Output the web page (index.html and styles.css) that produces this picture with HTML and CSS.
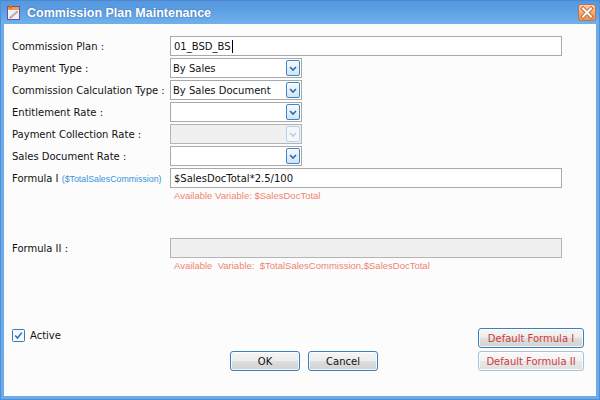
FILE: index.html
```html
<!DOCTYPE html>
<html>
<head>
<meta charset="utf-8">
<link rel="stylesheet" href="styles.css">
</head>
<body>
<div class="win">
  <div class="titlebar">
    <svg class="ticon" width="13" height="15" viewBox="0 0 13 15">
      <rect x="0.5" y="1.5" width="12" height="13" fill="#f4f0fa" stroke="#6b4fa8"/>
      <rect x="1" y="2" width="11" height="3" fill="#f0a040"/>
      <rect x="2" y="0.5" width="3" height="3" fill="#e06a20"/>
      <path d="M3 12 L10 6 L11 7 L4 13 Z" fill="#c8c8c8" stroke="#8a8a8a" stroke-width="0.6"/>
      <path d="M3 12 L2.5 13.5 L4 13 Z" fill="#555"/>
    </svg>
    <span class="title">Commission Plan Maintenance</span>
    <div class="close">
      <svg width="16" height="15" viewBox="0 0 16 15">
        <path d="M4 3.5 L12 11.5 M12 3.5 L4 11.5" stroke="#c8662e" stroke-width="4" stroke-linecap="square"/>
        <path d="M4 3.5 L12 11.5 M12 3.5 L4 11.5" stroke="#ffffff" stroke-width="2" stroke-linecap="square"/>
      </svg>
    </div>
  </div>
  <div class="client">
    <div class="form">
      <div class="row">
        <span class="lbl">Commission Plan :</span>
        <div class="input wide">01_BSD_BS<span class="caret"></span></div>
      </div>
      <div class="row">
        <span class="lbl">Payment Type :</span>
        <div class="select"><span class="val">By Sales</span><span class="arrow"><svg width="12" height="14" viewBox="0 0 12 14"><polyline points="3,6 6,9 9,6" fill="none" stroke="#2a6db5" stroke-width="1.6"/></svg></span></div>
      </div>
      <div class="row">
        <span class="lbl">Commission Calculation Type :</span>
        <div class="select"><span class="val">By Sales Document</span><span class="arrow"><svg width="12" height="14" viewBox="0 0 12 14"><polyline points="3,6 6,9 9,6" fill="none" stroke="#2a6db5" stroke-width="1.6"/></svg></span></div>
      </div>
      <div class="row">
        <span class="lbl">Entitlement Rate :</span>
        <div class="select"><span class="val"></span><span class="arrow"><svg width="12" height="14" viewBox="0 0 12 14"><polyline points="3,6 6,9 9,6" fill="none" stroke="#2a6db5" stroke-width="1.6"/></svg></span></div>
      </div>
      <div class="row">
        <span class="lbl">Payment Collection Rate :</span>
        <div class="select disabled"><span class="val"></span><span class="arrow"><svg width="12" height="14" viewBox="0 0 12 14"><polyline points="3,6 6,9 9,6" fill="none" stroke="#b9cfe3" stroke-width="1.6"/></svg></span></div>
      </div>
      <div class="row">
        <span class="lbl">Sales Document Rate :</span>
        <div class="select"><span class="val"></span><span class="arrow"><svg width="12" height="14" viewBox="0 0 12 14"><polyline points="3,6 6,9 9,6" fill="none" stroke="#2a6db5" stroke-width="1.6"/></svg></span></div>
      </div>
      <div class="row">
        <span class="lbl">Formula I <span class="var">($TotalSalesCommission)</span></span>
        <div class="input wide">$SalesDocTotal*2.5/100</div>
      </div>
      <div class="hint">Available Variable: $SalesDocTotal</div>
      <div class="row">
        <span class="lbl">Formula II :</span>
        <div class="input wide disabled"></div>
      </div>
      <div class="hint">Available&nbsp; Variable:&nbsp; $TotalSalesCommission,$SalesDocTotal</div>
    </div>
    <div class="bottom">
      <label class="chk">
        <svg width="13" height="13" viewBox="0 0 13 13">
          <rect x="0.5" y="0.5" width="12" height="12" rx="1" fill="#f6f9fc" stroke="#3a78b5"/>
          <polyline points="3.2,6.5 5.4,9 9.8,3.6" fill="none" stroke="#2a6db5" stroke-width="1.5"/>
        </svg>
        <span>Active</span>
      </label>
      <button class="btn def1">Default Formula I</button>
      <div class="okc">
        <button class="btn">OK</button>
        <button class="btn">Cancel</button>
      </div>
      <button class="btn def2">Default Formula II</button>
    </div>
  </div>
</div>
</body>
</html>
```
FILE: styles.css
```css
html, body {
  margin: 0;
  padding: 0;
}
body {
  width: 600px;
  height: 400px;
  overflow: hidden;
  font-family: "DejaVu Sans", "Liberation Sans", sans-serif;
  font-size: 10px;
  color: #111;
}
.win {
  width: 600px;
  height: 400px;
  box-sizing: border-box;
  display: flex;
  flex-direction: column;
  background: #6cacec;
  border: 1px solid #4f8fd6;
  border-top-color: #4a8ad4;
}
.titlebar {
  height: 23px;
  display: flex;
  align-items: center;
  padding-left: 6px;
  background: linear-gradient(#5797df, #5c9fe3 40%, #70b1ec);
}
.ticon {
  display: block;
}
.title {
  margin-left: 7px;
  font-family: "Liberation Sans", Arial, sans-serif;
  font-weight: bold;
  font-size: 12.5px;
  color: #fff;
  text-shadow: 0 0 2px rgba(30, 60, 120, 0.55);
}
.close {
  margin-left: auto;
  margin-right: 3px;
  align-self: flex-start;
  margin-top: 3px;
  width: 16px;
  height: 15px;
  border: 1px solid #b8764a;
  border-radius: 3px;
  background: linear-gradient(#fbd6b8, #f1a977 55%, #e9935c);
  display: flex;
  align-items: center;
  justify-content: center;
}
.close svg {
  display: block;
}
.client {
  flex: 1;
  margin: 0 3px 3px 3px;
  padding: 12px 12px 25px 8px;
  background: #fcfcfc;
  display: flex;
  flex-direction: column;
}
.form {
  display: flex;
  flex-direction: column;
}
.row {
  display: flex;
  align-items: center;
  height: 20px;
  margin-bottom: 2px;
}
.lbl {
  width: 158px;
  flex: none;
  white-space: nowrap;
}
.var {
  font-family: "Liberation Sans", Arial, sans-serif;
  font-size: 8.8px;
  color: #3793de;
}
.input {
  box-sizing: border-box;
  height: 20px;
  border: 1px solid #a9a9a9;
  background: #fff;
  padding-left: 3px;
  display: flex;
  align-items: center;
  white-space: nowrap;
}
.input.wide {
  width: 392px;
}
.input.disabled {
  background: #f0f0f0;
  border-color: #b4b4b4;
}
.caret {
  display: inline-block;
  width: 1px;
  height: 13px;
  background: #000;
  margin-left: 1px;
}
.select {
  box-sizing: border-box;
  width: 132px;
  height: 20px;
  border: 1px solid #a9a9a9;
  background: #fff;
  display: flex;
  align-items: center;
  padding-left: 2px;
}
.select.disabled {
  background: #f0f0f0;
  border-color: #b4b4b4;
}
.val {
  flex: 1;
  white-space: nowrap;
}
.arrow {
  box-sizing: border-box;
  width: 14px;
  height: 16px;
  margin-right: 1px;
  border: 1px solid #3f86c9;
  border-radius: 2px;
  background: linear-gradient(#f7fafd, #e3edf7 60%, #d3e4f3);
  display: flex;
  align-items: center;
  justify-content: center;
}
.select.disabled .arrow {
  border-color: #bcd2e6;
  background: #f4f6f8;
}
.arrow svg {
  display: block;
}
.hint {
  margin-left: 162px;
  height: 12px;
  line-height: 12px;
  font-family: "Liberation Sans", Arial, sans-serif;
  font-size: 9.5px;
  color: #ef8471;
  white-space: nowrap;
  margin-bottom: 36px;
}
.bottom {
  margin-top: auto;
  display: grid;
  grid-template-columns: 218px 1fr 106px;
  grid-template-rows: 20px 20px;
  row-gap: 3px;
}
.chk {
  grid-column: 1;
  grid-row: 1;
  display: flex;
  align-items: center;
  gap: 5px;
  align-self: start;
  margin-top: 1px;
}
.chk svg {
  display: block;
}
.btn {
  box-sizing: border-box;
  height: 20px;
  margin: 0;
  padding: 0;
  font-family: "DejaVu Sans", "Liberation Sans", sans-serif;
  font-size: 10px;
  color: #111;
  border: 1px solid #3c7fbf;
  border-radius: 3px;
  background: linear-gradient(#f6f6f6, #ececec 48%, #dedede 52%, #d2d2d2);
  box-shadow: inset 0 0 0 1px rgba(255, 255, 255, 0.8);
}
.def1 {
  grid-column: 3;
  grid-row: 1;
  width: 106px;
  color: #cf3a3a;
}
.def2 {
  grid-column: 3;
  grid-row: 2;
  width: 106px;
  color: #cf3a3a;
  border-color: #a9c2da;
  background: linear-gradient(#fafafa, #f2f2f2 48%, #e8e8e8 52%, #e0e0e0);
}
.okc {
  grid-column: 2;
  grid-row: 2;
  display: flex;
  gap: 8px;
}
.okc .btn {
  width: 70px;
}
```
